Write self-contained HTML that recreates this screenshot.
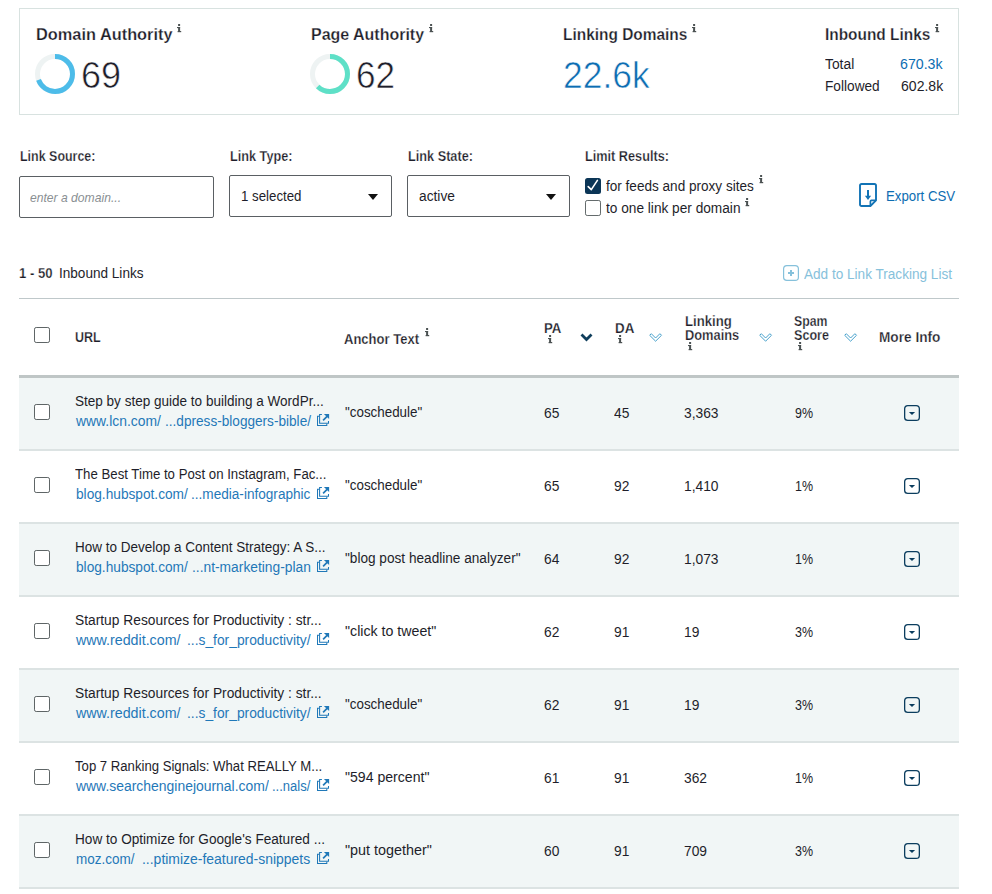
<!DOCTYPE html>
<html><head><meta charset="utf-8"><title>Inbound Links</title>
<style>
html,body{margin:0;padding:0;background:#fff;width:992px;height:894px;overflow:hidden;}
body{position:relative;font-family:"Liberation Sans",sans-serif;}
.t{position:absolute;line-height:1;white-space:nowrap;}
.h{-webkit-text-stroke:0.25px #fff;}
.r{position:absolute;}
</style></head><body>
<div class="r" style="left:19px;top:8px;width:940px;height:107px;border:1px solid #d8e2e0;box-sizing:border-box;"></div>
<div class="t h" style="left:35.70px;top:26px;font-size:17.3px;font-weight:bold;color:#1e1e2a;font-style:normal;letter-spacing:0px;transform:scaleX(0.9461);transform-origin:0 0;">Domain Authority</div>
<svg class="r" style="left:177px;top:24px" width="5" height="9" viewBox="0 0 5 9"><g fill="#4b5152"><rect x="1.1" y="0" width="2" height="2"/><rect x="0" y="3" width="3.1" height="1.1"/><rect x="1.1" y="3" width="2" height="5"/><rect x="0.6" y="7" width="3.6" height="1.2"/></g></svg>
<svg class="r" style="left:35.3px;top:54px" width="40" height="40" viewBox="0 0 40 40"><circle cx="20" cy="20" r="17.5" fill="none" stroke="#eef3f3" stroke-width="5"/><circle cx="20" cy="20" r="17.5" fill="none" stroke="#4dbce9" stroke-width="5" stroke-dasharray="75.87 109.96" transform="rotate(-90 20 20)"/></svg>
<div class="t" style="left:81.30px;top:58px;font-size:36.5px;font-weight:normal;color:#1e1e2a;font-style:normal;letter-spacing:0px;transform:scaleX(0.9855);transform-origin:0 0;-webkit-text-stroke:0.6px #fff;">69</div>
<div class="t h" style="left:310.80px;top:26px;font-size:17.3px;font-weight:bold;color:#1e1e2a;font-style:normal;letter-spacing:0px;transform:scaleX(0.9249);transform-origin:0 0;">Page Authority</div>
<svg class="r" style="left:429px;top:24px" width="5" height="9" viewBox="0 0 5 9"><g fill="#4b5152"><rect x="1.1" y="0" width="2" height="2"/><rect x="0" y="3" width="3.1" height="1.1"/><rect x="1.1" y="3" width="2" height="5"/><rect x="0.6" y="7" width="3.6" height="1.2"/></g></svg>
<svg class="r" style="left:310px;top:54px" width="40" height="40" viewBox="0 0 40 40"><circle cx="20" cy="20" r="17.5" fill="none" stroke="#eef3f3" stroke-width="5"/><circle cx="20" cy="20" r="17.5" fill="none" stroke="#5ee0c7" stroke-width="5" stroke-dasharray="68.17 109.96" transform="rotate(-90 20 20)"/></svg>
<div class="t" style="left:356.20px;top:58px;font-size:36.5px;font-weight:normal;color:#1e1e2a;font-style:normal;letter-spacing:0px;transform:scaleX(0.9633);transform-origin:0 0;-webkit-text-stroke:0.6px #fff;">62</div>
<div class="t h" style="left:562.50px;top:26px;font-size:17.3px;font-weight:bold;color:#1e1e2a;font-style:normal;letter-spacing:0px;transform:scaleX(0.8933);transform-origin:0 0;">Linking Domains</div>
<svg class="r" style="left:691.8px;top:24px" width="5" height="9" viewBox="0 0 5 9"><g fill="#4b5152"><rect x="1.1" y="0" width="2" height="2"/><rect x="0" y="3" width="3.1" height="1.1"/><rect x="1.1" y="3" width="2" height="5"/><rect x="0.6" y="7" width="3.6" height="1.2"/></g></svg>
<div class="t" style="left:563.40px;top:58px;font-size:36.5px;font-weight:normal;color:#0d6db2;font-style:normal;letter-spacing:0px;transform:scaleX(0.9703);transform-origin:0 0;-webkit-text-stroke:0.6px #fff;">22.6k</div>
<div class="t h" style="left:825.20px;top:26px;font-size:17.3px;font-weight:bold;color:#1e1e2a;font-style:normal;letter-spacing:0px;transform:scaleX(0.8916);transform-origin:0 0;">Inbound Links</div>
<svg class="r" style="left:935px;top:24px" width="5" height="9" viewBox="0 0 5 9"><g fill="#4b5152"><rect x="1.1" y="0" width="2" height="2"/><rect x="0" y="3" width="3.1" height="1.1"/><rect x="1.1" y="3" width="2" height="5"/><rect x="0.6" y="7" width="3.6" height="1.2"/></g></svg>
<div class="t" style="left:825.00px;top:57px;font-size:14px;font-weight:normal;color:#1e1e2a;font-style:normal;letter-spacing:0px;transform:scaleX(0.9876);transform-origin:0 0;">Total</div>
<div class="t" style="left:899.70px;top:57px;font-size:14px;font-weight:normal;color:#0d6db2;font-style:normal;letter-spacing:0px;transform:scaleX(1.0129);transform-origin:0 0;">670.3k</div>
<div class="t" style="left:825.00px;top:79px;font-size:14px;font-weight:normal;color:#1e1e2a;font-style:normal;letter-spacing:0px;transform:scaleX(0.9763);transform-origin:0 0;">Followed</div>
<div class="t" style="left:900.60px;top:79px;font-size:14px;font-weight:normal;color:#1e1e2a;font-style:normal;letter-spacing:0px;transform:scaleX(1.0034);transform-origin:0 0;">602.8k</div>
<div class="t h" style="left:19.50px;top:149px;font-size:14.4px;font-weight:bold;color:#1e1e2a;font-style:normal;letter-spacing:0px;transform:scaleX(0.8656);transform-origin:0 0;">Link Source:</div>
<div class="t h" style="left:229.50px;top:149px;font-size:14.4px;font-weight:bold;color:#1e1e2a;font-style:normal;letter-spacing:0px;transform:scaleX(0.8811);transform-origin:0 0;">Link Type:</div>
<div class="t h" style="left:407.50px;top:149px;font-size:14.4px;font-weight:bold;color:#1e1e2a;font-style:normal;letter-spacing:0px;transform:scaleX(0.8830);transform-origin:0 0;">Link State:</div>
<div class="t h" style="left:585.00px;top:149px;font-size:14.4px;font-weight:bold;color:#1e1e2a;font-style:normal;letter-spacing:0px;transform:scaleX(0.8822);transform-origin:0 0;">Limit Results:</div>
<div class="r" style="left:19px;top:176px;width:195px;height:42px;border:1px solid #5a5f63;border-radius:2px;box-sizing:border-box;"></div>
<div class="t" style="left:30.00px;top:191px;font-size:13px;font-weight:normal;color:#8a8f93;font-style:italic;letter-spacing:0px;transform:scaleX(0.9328);transform-origin:0 0;">enter a domain...</div>
<div class="r" style="left:229px;top:175px;width:163px;height:42px;border:1px solid #5a5f63;border-radius:2px;box-sizing:border-box;"></div>
<div class="t" style="left:241.20px;top:189px;font-size:14px;font-weight:normal;color:#1e1e2a;font-style:normal;letter-spacing:0px;transform:scaleX(0.9479);transform-origin:0 0;">1 selected</div>
<svg class="r" style="left:368px;top:194px" width="10" height="6" viewBox="0 0 10 6"><path d="M0 0H10L5 6Z" fill="#111"/></svg>
<div class="r" style="left:407px;top:175px;width:163px;height:42px;border:1px solid #5a5f63;border-radius:2px;box-sizing:border-box;"></div>
<div class="t" style="left:419.20px;top:189px;font-size:14px;font-weight:normal;color:#1e1e2a;font-style:normal;letter-spacing:0px;transform:scaleX(0.9817);transform-origin:0 0;">active</div>
<svg class="r" style="left:546px;top:194px" width="10" height="6" viewBox="0 0 10 6"><path d="M0 0H10L5 6Z" fill="#111"/></svg>
<div class="r" style="left:585px;top:178px;width:16px;height:16px;background:#0b3556;border-radius:2.5px;"></div>
<svg class="r" style="left:585px;top:178px" width="16" height="16" viewBox="0 0 16 16"><path d="M3.2 8.6 L6.3 11.6 L12.4 2.4" fill="none" stroke="#fff" stroke-width="1.6" stroke-linecap="round" stroke-linejoin="round"/></svg>
<div class="t" style="left:606.25px;top:178.5px;font-size:14px;font-weight:normal;color:#1e1e2a;font-style:normal;letter-spacing:0px;transform:scaleX(0.9690);transform-origin:0 0;">for feeds and proxy sites</div>
<svg class="r" style="left:758.5px;top:175.3px" width="5" height="9" viewBox="0 0 5 9"><g fill="#4b5152"><rect x="1.1" y="0" width="2" height="2"/><rect x="0" y="3" width="3.1" height="1.1"/><rect x="1.1" y="3" width="2" height="5"/><rect x="0.6" y="7" width="3.6" height="1.2"/></g></svg>
<div class="r" style="left:585px;top:200px;width:16px;height:16px;border:1.5px solid #646b6c;border-radius:2.2px;box-sizing:border-box;background:#fff;"></div>
<div class="t" style="left:606.25px;top:200.5px;font-size:14px;font-weight:normal;color:#1e1e2a;font-style:normal;letter-spacing:0px;transform:scaleX(0.9764);transform-origin:0 0;">to one link per domain</div>
<svg class="r" style="left:745.4px;top:197.5px" width="5" height="9" viewBox="0 0 5 9"><g fill="#4b5152"><rect x="1.1" y="0" width="2" height="2"/><rect x="0" y="3" width="3.1" height="1.1"/><rect x="1.1" y="3" width="2" height="5"/><rect x="0.6" y="7" width="3.6" height="1.2"/></g></svg>
<svg class="r" style="left:859px;top:183px" width="18" height="24" viewBox="0 0 18 24"><path d="M1 2.6 Q1 1 2.6 1 H15.4 Q17 1 17 2.6 V17.4 L11.4 23 H2.6 Q1 23 1 21.4 Z" fill="none" stroke="#1273b5" stroke-width="1.9" stroke-linejoin="round"/><path d="M17 17.4 H12.4 Q11.4 17.4 11.4 18.4 V23" fill="none" stroke="#1273b5" stroke-width="1.7"/><path d="M9 7 V14" stroke="#1273b5" stroke-width="2"/><path d="M5.9 12.7 H12.1 L9 16.9 Z" fill="#1273b5"/></svg>
<div class="t" style="left:886.25px;top:189px;font-size:14px;font-weight:normal;color:#0d6db2;font-style:normal;letter-spacing:0px;transform:scaleX(0.9462);transform-origin:0 0;">Export CSV</div>
<div class="t h" style="left:19.20px;top:266px;font-size:14px;font-weight:bold;color:#1e1e2a;font-style:normal;letter-spacing:0px;transform:scaleX(0.9386);transform-origin:0 0;">1 - 50</div>
<div class="t" style="left:59.00px;top:266px;font-size:14px;font-weight:normal;color:#1e1e2a;font-style:normal;letter-spacing:0px;transform:scaleX(0.9693);transform-origin:0 0;">Inbound Links</div>
<svg class="r" style="left:783px;top:265px" width="16" height="16" viewBox="0 0 16 16"><rect x="0.6" y="0.6" width="14.8" height="14.8" rx="3.2" fill="none" stroke="#86c1db" stroke-width="1.2"/><path d="M8 5V11M5 8H11" stroke="#86c1db" stroke-width="2"/></svg>
<div class="t" style="left:803.90px;top:267px;font-size:14px;font-weight:normal;color:#86c1db;font-style:normal;letter-spacing:0px;transform:scaleX(0.9703);transform-origin:0 0;">Add to Link Tracking List</div>
<div class="r" style="left:19px;top:298px;width:940px;height:1px;background:#bfc8ca;"></div>
<div class="r" style="left:34px;top:327px;width:16px;height:16px;border:1.5px solid #5e6566;border-radius:2.2px;box-sizing:border-box;background:#fff;"></div>
<div class="t h" style="left:75.00px;top:330px;font-size:14.2px;font-weight:bold;color:#1e1e2a;font-style:normal;letter-spacing:0px;transform:scaleX(0.8807);transform-origin:0 0;">URL</div>
<div class="t h" style="left:344.40px;top:332px;font-size:14.2px;font-weight:bold;color:#1e1e2a;font-style:normal;letter-spacing:0px;transform:scaleX(0.9182);transform-origin:0 0;">Anchor Text</div>
<svg class="r" style="left:424.5px;top:328px" width="5" height="9" viewBox="0 0 5 9"><g fill="#4b5152"><rect x="1.1" y="0" width="2" height="2"/><rect x="0" y="3" width="3.1" height="1.1"/><rect x="1.1" y="3" width="2" height="5"/><rect x="0.6" y="7" width="3.6" height="1.2"/></g></svg>
<div class="t h" style="left:544.40px;top:321px;font-size:14.2px;font-weight:bold;color:#1e1e2a;font-style:normal;letter-spacing:0px;transform:scaleX(0.9318);transform-origin:0 0;">PA</div>
<svg class="r" style="left:548px;top:335px" width="5" height="9" viewBox="0 0 5 9"><g fill="#4b5152"><rect x="1.1" y="0" width="2" height="2"/><rect x="0" y="3" width="3.1" height="1.1"/><rect x="1.1" y="3" width="2" height="5"/><rect x="0.6" y="7" width="3.6" height="1.2"/></g></svg>
<svg class="r" style="left:580px;top:333px" width="13" height="9" viewBox="0 0 13 9"><path d="M1.5 1.5 L6.5 6.5 L11.5 1.5" fill="none" stroke="#0f3e5c" stroke-width="2.8"/></svg>
<div class="t h" style="left:614.70px;top:321px;font-size:14.2px;font-weight:bold;color:#1e1e2a;font-style:normal;letter-spacing:0px;transform:scaleX(0.9412);transform-origin:0 0;">DA</div>
<svg class="r" style="left:618.2px;top:335px" width="5" height="9" viewBox="0 0 5 9"><g fill="#4b5152"><rect x="1.1" y="0" width="2" height="2"/><rect x="0" y="3" width="3.1" height="1.1"/><rect x="1.1" y="3" width="2" height="5"/><rect x="0.6" y="7" width="3.6" height="1.2"/></g></svg>
<svg class="r" style="left:649.2px;top:332.5px" width="13.5" height="9" viewBox="0 0 13.5 9"><path d="M0.7 2.3L2.3 0.7L6.6 5L10.9 0.7L12.5 2.3L6.6 8.2Z" fill="none" stroke="#3d9cc9" stroke-width="0.95"/></svg>
<div class="t h" style="left:684.70px;top:314px;font-size:14.2px;font-weight:bold;color:#1e1e2a;font-style:normal;letter-spacing:0px;transform:scaleX(0.9271);transform-origin:0 0;">Linking</div>
<div class="t h" style="left:684.70px;top:328px;font-size:14.2px;font-weight:bold;color:#1e1e2a;font-style:normal;letter-spacing:0px;transform:scaleX(0.9055);transform-origin:0 0;">Domains</div>
<svg class="r" style="left:688px;top:342px" width="5" height="9" viewBox="0 0 5 9"><g fill="#4b5152"><rect x="1.1" y="0" width="2" height="2"/><rect x="0" y="3" width="3.1" height="1.1"/><rect x="1.1" y="3" width="2" height="5"/><rect x="0.6" y="7" width="3.6" height="1.2"/></g></svg>
<svg class="r" style="left:759.2px;top:332.5px" width="13.5" height="9" viewBox="0 0 13.5 9"><path d="M0.7 2.3L2.3 0.7L6.6 5L10.9 0.7L12.5 2.3L6.6 8.2Z" fill="none" stroke="#3d9cc9" stroke-width="0.95"/></svg>
<div class="t h" style="left:794.30px;top:314px;font-size:14.2px;font-weight:bold;color:#1e1e2a;font-style:normal;letter-spacing:0px;transform:scaleX(0.8664);transform-origin:0 0;">Spam</div>
<div class="t h" style="left:794.30px;top:328px;font-size:14.2px;font-weight:bold;color:#1e1e2a;font-style:normal;letter-spacing:0px;transform:scaleX(0.8869);transform-origin:0 0;">Score</div>
<svg class="r" style="left:798.2px;top:342px" width="5" height="9" viewBox="0 0 5 9"><g fill="#4b5152"><rect x="1.1" y="0" width="2" height="2"/><rect x="0" y="3" width="3.1" height="1.1"/><rect x="1.1" y="3" width="2" height="5"/><rect x="0.6" y="7" width="3.6" height="1.2"/></g></svg>
<svg class="r" style="left:844.2px;top:332.5px" width="13.5" height="9" viewBox="0 0 13.5 9"><path d="M0.7 2.3L2.3 0.7L6.6 5L10.9 0.7L12.5 2.3L6.6 8.2Z" fill="none" stroke="#3d9cc9" stroke-width="0.95"/></svg>
<div class="t h" style="left:879.00px;top:330px;font-size:14.2px;font-weight:bold;color:#1e1e2a;font-style:normal;letter-spacing:0px;transform:scaleX(0.9624);transform-origin:0 0;">More Info</div>
<div class="r" style="left:19px;top:375px;width:940px;height:3px;background:#bfc6c6;"></div>
<div class="r" style="left:19px;top:378px;width:940px;height:71px;background:#f1f6f6;"></div>
<div class="r" style="left:19px;top:449px;width:940px;height:2px;background:#dce3e3;"></div>
<div class="r" style="left:34px;top:404px;width:16px;height:16px;border:1.5px solid #5e6566;border-radius:2.2px;box-sizing:border-box;background:#fff;"></div>
<div class="t" style="left:75.30px;top:394px;font-size:14px;font-weight:normal;color:#1e1e2a;font-style:normal;letter-spacing:0px;transform:scaleX(0.9664);transform-origin:0 0;">Step by step guide to building a WordPr...</div>
<div class="t" style="left:75.53px;top:414px;font-size:14px;font-weight:normal;color:#1f78b8;font-style:normal;letter-spacing:0px;transform:scaleX(0.9917);transform-origin:0 0;">www.lcn.com/</div>
<div class="t" style="left:164.60px;top:414px;font-size:14px;font-weight:normal;color:#1f78b8;font-style:normal;letter-spacing:0px;transform:scaleX(0.9721);transform-origin:0 0;">...dpress-bloggers-bible/</div>
<svg class="r" style="left:317px;top:413px" width="13" height="13" viewBox="0 0 13 13"><g fill="none" stroke="#1f78b8" stroke-width="1.05"><path d="M2.3 3.2H0.5V12.5H9.8V10.8"/><path d="M4.9 1.4H2.6V10.3H11.5V8"/></g><path d="M6.1 7.4L10.6 2.9" stroke="#1f78b8" stroke-width="1.7"/><path d="M6.9 0.9H12.1V6.1Z" fill="#1f78b8"/></svg>
<div class="t" style="left:344.50px;top:405px;font-size:14px;font-weight:normal;color:#1e1e2a;font-style:normal;letter-spacing:0px;transform:scaleX(0.9558);transform-origin:0 0;">"coschedule"</div>
<div class="t" style="left:544.20px;top:406px;font-size:14.6px;font-weight:normal;color:#1e1e2a;font-style:normal;letter-spacing:0px;transform:scaleX(0.9452);transform-origin:0 0;">65</div>
<div class="t" style="left:614.00px;top:406px;font-size:14.6px;font-weight:normal;color:#1e1e2a;font-style:normal;letter-spacing:0px;transform:scaleX(0.9452);transform-origin:0 0;">45</div>
<div class="t" style="left:684.30px;top:406px;font-size:14.6px;font-weight:normal;color:#1e1e2a;font-style:normal;letter-spacing:0px;transform:scaleX(0.9452);transform-origin:0 0;">3,363</div>
<div class="t" style="left:794.80px;top:406px;font-size:14.6px;font-weight:normal;color:#1e1e2a;font-style:normal;letter-spacing:0px;transform:scaleX(0.8532);transform-origin:0 0;">9%</div>
<svg class="r" style="left:904px;top:405px" width="16" height="16" viewBox="0 0 16 16"><rect x="0.65" y="0.65" width="14.7" height="14.7" rx="3.2" fill="none" stroke="#0b3d5e" stroke-width="1.3"/><path d="M4.9 6.9H11.1L8 10Z" fill="#0b3d5e"/></svg>
<div class="r" style="left:19px;top:522px;width:940px;height:2px;background:#dce3e3;"></div>
<div class="r" style="left:34px;top:477px;width:16px;height:16px;border:1.5px solid #5e6566;border-radius:2.2px;box-sizing:border-box;background:#fff;"></div>
<div class="t" style="left:75.30px;top:467px;font-size:14px;font-weight:normal;color:#1e1e2a;font-style:normal;letter-spacing:0px;transform:scaleX(0.9447);transform-origin:0 0;">The Best Time to Post on Instagram, Fac...</div>
<div class="t" style="left:75.50px;top:487px;font-size:14px;font-weight:normal;color:#1f78b8;font-style:normal;letter-spacing:0px;transform:scaleX(0.9772);transform-origin:0 0;">blog.hubspot.com/</div>
<div class="t" style="left:191.20px;top:487px;font-size:14px;font-weight:normal;color:#1f78b8;font-style:normal;letter-spacing:0px;transform:scaleX(0.9711);transform-origin:0 0;">...media-infographic</div>
<svg class="r" style="left:317px;top:486px" width="13" height="13" viewBox="0 0 13 13"><g fill="none" stroke="#1f78b8" stroke-width="1.05"><path d="M2.3 3.2H0.5V12.5H9.8V10.8"/><path d="M4.9 1.4H2.6V10.3H11.5V8"/></g><path d="M6.1 7.4L10.6 2.9" stroke="#1f78b8" stroke-width="1.7"/><path d="M6.9 0.9H12.1V6.1Z" fill="#1f78b8"/></svg>
<div class="t" style="left:344.50px;top:478px;font-size:14px;font-weight:normal;color:#1e1e2a;font-style:normal;letter-spacing:0px;transform:scaleX(0.9558);transform-origin:0 0;">"coschedule"</div>
<div class="t" style="left:544.20px;top:479px;font-size:14.6px;font-weight:normal;color:#1e1e2a;font-style:normal;letter-spacing:0px;transform:scaleX(0.9452);transform-origin:0 0;">65</div>
<div class="t" style="left:614.00px;top:479px;font-size:14.6px;font-weight:normal;color:#1e1e2a;font-style:normal;letter-spacing:0px;transform:scaleX(0.9452);transform-origin:0 0;">92</div>
<div class="t" style="left:684.30px;top:479px;font-size:14.6px;font-weight:normal;color:#1e1e2a;font-style:normal;letter-spacing:0px;transform:scaleX(0.9452);transform-origin:0 0;">1,410</div>
<div class="t" style="left:794.80px;top:479px;font-size:14.6px;font-weight:normal;color:#1e1e2a;font-style:normal;letter-spacing:0px;transform:scaleX(0.8532);transform-origin:0 0;">1%</div>
<svg class="r" style="left:904px;top:478px" width="16" height="16" viewBox="0 0 16 16"><rect x="0.65" y="0.65" width="14.7" height="14.7" rx="3.2" fill="none" stroke="#0b3d5e" stroke-width="1.3"/><path d="M4.9 6.9H11.1L8 10Z" fill="#0b3d5e"/></svg>
<div class="r" style="left:19px;top:524px;width:940px;height:71px;background:#f1f6f6;"></div>
<div class="r" style="left:19px;top:595px;width:940px;height:2px;background:#dce3e3;"></div>
<div class="r" style="left:34px;top:550px;width:16px;height:16px;border:1.5px solid #5e6566;border-radius:2.2px;box-sizing:border-box;background:#fff;"></div>
<div class="t" style="left:75.30px;top:540px;font-size:14px;font-weight:normal;color:#1e1e2a;font-style:normal;letter-spacing:0px;transform:scaleX(0.9641);transform-origin:0 0;">How to Develop a Content Strategy: A S...</div>
<div class="t" style="left:75.50px;top:560px;font-size:14px;font-weight:normal;color:#1f78b8;font-style:normal;letter-spacing:0px;transform:scaleX(0.9772);transform-origin:0 0;">blog.hubspot.com/</div>
<div class="t" style="left:191.70px;top:560px;font-size:14px;font-weight:normal;color:#1f78b8;font-style:normal;letter-spacing:0px;transform:scaleX(0.9858);transform-origin:0 0;">...nt-marketing-plan</div>
<svg class="r" style="left:317px;top:559px" width="13" height="13" viewBox="0 0 13 13"><g fill="none" stroke="#1f78b8" stroke-width="1.05"><path d="M2.3 3.2H0.5V12.5H9.8V10.8"/><path d="M4.9 1.4H2.6V10.3H11.5V8"/></g><path d="M6.1 7.4L10.6 2.9" stroke="#1f78b8" stroke-width="1.7"/><path d="M6.9 0.9H12.1V6.1Z" fill="#1f78b8"/></svg>
<div class="t" style="left:344.50px;top:551px;font-size:14px;font-weight:normal;color:#1e1e2a;font-style:normal;letter-spacing:0px;transform:scaleX(0.9729);transform-origin:0 0;">"blog post headline analyzer"</div>
<div class="t" style="left:544.20px;top:552px;font-size:14.6px;font-weight:normal;color:#1e1e2a;font-style:normal;letter-spacing:0px;transform:scaleX(0.9452);transform-origin:0 0;">64</div>
<div class="t" style="left:614.00px;top:552px;font-size:14.6px;font-weight:normal;color:#1e1e2a;font-style:normal;letter-spacing:0px;transform:scaleX(0.9452);transform-origin:0 0;">92</div>
<div class="t" style="left:684.30px;top:552px;font-size:14.6px;font-weight:normal;color:#1e1e2a;font-style:normal;letter-spacing:0px;transform:scaleX(0.9452);transform-origin:0 0;">1,073</div>
<div class="t" style="left:794.80px;top:552px;font-size:14.6px;font-weight:normal;color:#1e1e2a;font-style:normal;letter-spacing:0px;transform:scaleX(0.8532);transform-origin:0 0;">1%</div>
<svg class="r" style="left:904px;top:551px" width="16" height="16" viewBox="0 0 16 16"><rect x="0.65" y="0.65" width="14.7" height="14.7" rx="3.2" fill="none" stroke="#0b3d5e" stroke-width="1.3"/><path d="M4.9 6.9H11.1L8 10Z" fill="#0b3d5e"/></svg>
<div class="r" style="left:19px;top:668px;width:940px;height:2px;background:#dce3e3;"></div>
<div class="r" style="left:34px;top:623px;width:16px;height:16px;border:1.5px solid #5e6566;border-radius:2.2px;box-sizing:border-box;background:#fff;"></div>
<div class="t" style="left:75.30px;top:613px;font-size:14px;font-weight:normal;color:#1e1e2a;font-style:normal;letter-spacing:0px;transform:scaleX(0.9847);transform-origin:0 0;">Startup Resources for Productivity : str...</div>
<div class="t" style="left:75.53px;top:633px;font-size:14px;font-weight:normal;color:#1f78b8;font-style:normal;letter-spacing:0px;transform:scaleX(1.0172);transform-origin:0 0;">www.reddit.com/</div>
<div class="t" style="left:187.00px;top:633px;font-size:14px;font-weight:normal;color:#1f78b8;font-style:normal;letter-spacing:0px;transform:scaleX(0.9867);transform-origin:0 0;">...s_for_productivity/</div>
<svg class="r" style="left:317px;top:632px" width="13" height="13" viewBox="0 0 13 13"><g fill="none" stroke="#1f78b8" stroke-width="1.05"><path d="M2.3 3.2H0.5V12.5H9.8V10.8"/><path d="M4.9 1.4H2.6V10.3H11.5V8"/></g><path d="M6.1 7.4L10.6 2.9" stroke="#1f78b8" stroke-width="1.7"/><path d="M6.9 0.9H12.1V6.1Z" fill="#1f78b8"/></svg>
<div class="t" style="left:344.50px;top:624px;font-size:14px;font-weight:normal;color:#1e1e2a;font-style:normal;letter-spacing:0px;transform:scaleX(1.0136);transform-origin:0 0;">"click to tweet"</div>
<div class="t" style="left:544.20px;top:625px;font-size:14.6px;font-weight:normal;color:#1e1e2a;font-style:normal;letter-spacing:0px;transform:scaleX(0.9452);transform-origin:0 0;">62</div>
<div class="t" style="left:614.00px;top:625px;font-size:14.6px;font-weight:normal;color:#1e1e2a;font-style:normal;letter-spacing:0px;transform:scaleX(0.9452);transform-origin:0 0;">91</div>
<div class="t" style="left:684.30px;top:625px;font-size:14.6px;font-weight:normal;color:#1e1e2a;font-style:normal;letter-spacing:0px;transform:scaleX(0.9452);transform-origin:0 0;">19</div>
<div class="t" style="left:794.80px;top:625px;font-size:14.6px;font-weight:normal;color:#1e1e2a;font-style:normal;letter-spacing:0px;transform:scaleX(0.8532);transform-origin:0 0;">3%</div>
<svg class="r" style="left:904px;top:624px" width="16" height="16" viewBox="0 0 16 16"><rect x="0.65" y="0.65" width="14.7" height="14.7" rx="3.2" fill="none" stroke="#0b3d5e" stroke-width="1.3"/><path d="M4.9 6.9H11.1L8 10Z" fill="#0b3d5e"/></svg>
<div class="r" style="left:19px;top:670px;width:940px;height:71px;background:#f1f6f6;"></div>
<div class="r" style="left:19px;top:741px;width:940px;height:2px;background:#dce3e3;"></div>
<div class="r" style="left:34px;top:696px;width:16px;height:16px;border:1.5px solid #5e6566;border-radius:2.2px;box-sizing:border-box;background:#fff;"></div>
<div class="t" style="left:75.30px;top:686px;font-size:14px;font-weight:normal;color:#1e1e2a;font-style:normal;letter-spacing:0px;transform:scaleX(0.9847);transform-origin:0 0;">Startup Resources for Productivity : str...</div>
<div class="t" style="left:75.53px;top:706px;font-size:14px;font-weight:normal;color:#1f78b8;font-style:normal;letter-spacing:0px;transform:scaleX(1.0172);transform-origin:0 0;">www.reddit.com/</div>
<div class="t" style="left:187.00px;top:706px;font-size:14px;font-weight:normal;color:#1f78b8;font-style:normal;letter-spacing:0px;transform:scaleX(0.9867);transform-origin:0 0;">...s_for_productivity/</div>
<svg class="r" style="left:317px;top:705px" width="13" height="13" viewBox="0 0 13 13"><g fill="none" stroke="#1f78b8" stroke-width="1.05"><path d="M2.3 3.2H0.5V12.5H9.8V10.8"/><path d="M4.9 1.4H2.6V10.3H11.5V8"/></g><path d="M6.1 7.4L10.6 2.9" stroke="#1f78b8" stroke-width="1.7"/><path d="M6.9 0.9H12.1V6.1Z" fill="#1f78b8"/></svg>
<div class="t" style="left:344.50px;top:697px;font-size:14px;font-weight:normal;color:#1e1e2a;font-style:normal;letter-spacing:0px;transform:scaleX(0.9558);transform-origin:0 0;">"coschedule"</div>
<div class="t" style="left:544.20px;top:698px;font-size:14.6px;font-weight:normal;color:#1e1e2a;font-style:normal;letter-spacing:0px;transform:scaleX(0.9452);transform-origin:0 0;">62</div>
<div class="t" style="left:614.00px;top:698px;font-size:14.6px;font-weight:normal;color:#1e1e2a;font-style:normal;letter-spacing:0px;transform:scaleX(0.9452);transform-origin:0 0;">91</div>
<div class="t" style="left:684.30px;top:698px;font-size:14.6px;font-weight:normal;color:#1e1e2a;font-style:normal;letter-spacing:0px;transform:scaleX(0.9452);transform-origin:0 0;">19</div>
<div class="t" style="left:794.80px;top:698px;font-size:14.6px;font-weight:normal;color:#1e1e2a;font-style:normal;letter-spacing:0px;transform:scaleX(0.8532);transform-origin:0 0;">3%</div>
<svg class="r" style="left:904px;top:697px" width="16" height="16" viewBox="0 0 16 16"><rect x="0.65" y="0.65" width="14.7" height="14.7" rx="3.2" fill="none" stroke="#0b3d5e" stroke-width="1.3"/><path d="M4.9 6.9H11.1L8 10Z" fill="#0b3d5e"/></svg>
<div class="r" style="left:19px;top:814px;width:940px;height:2px;background:#dce3e3;"></div>
<div class="r" style="left:34px;top:769px;width:16px;height:16px;border:1.5px solid #5e6566;border-radius:2.2px;box-sizing:border-box;background:#fff;"></div>
<div class="t" style="left:75.30px;top:759px;font-size:14px;font-weight:normal;color:#1e1e2a;font-style:normal;letter-spacing:0px;transform:scaleX(0.9389);transform-origin:0 0;">Top 7 Ranking Signals: What REALLY M...</div>
<div class="t" style="left:75.53px;top:779px;font-size:14px;font-weight:normal;color:#1f78b8;font-style:normal;letter-spacing:0px;transform:scaleX(0.9948);transform-origin:0 0;">www.searchenginejournal.com/</div>
<div class="t" style="left:272.20px;top:779px;font-size:14px;font-weight:normal;color:#1f78b8;font-style:normal;letter-spacing:0px;transform:scaleX(0.9310);transform-origin:0 0;">...nals/</div>
<svg class="r" style="left:317px;top:778px" width="13" height="13" viewBox="0 0 13 13"><g fill="none" stroke="#1f78b8" stroke-width="1.05"><path d="M2.3 3.2H0.5V12.5H9.8V10.8"/><path d="M4.9 1.4H2.6V10.3H11.5V8"/></g><path d="M6.1 7.4L10.6 2.9" stroke="#1f78b8" stroke-width="1.7"/><path d="M6.9 0.9H12.1V6.1Z" fill="#1f78b8"/></svg>
<div class="t" style="left:344.50px;top:770px;font-size:14px;font-weight:normal;color:#1e1e2a;font-style:normal;letter-spacing:0px;transform:scaleX(1.0061);transform-origin:0 0;">"594 percent"</div>
<div class="t" style="left:544.20px;top:771px;font-size:14.6px;font-weight:normal;color:#1e1e2a;font-style:normal;letter-spacing:0px;transform:scaleX(0.9452);transform-origin:0 0;">61</div>
<div class="t" style="left:614.00px;top:771px;font-size:14.6px;font-weight:normal;color:#1e1e2a;font-style:normal;letter-spacing:0px;transform:scaleX(0.9452);transform-origin:0 0;">91</div>
<div class="t" style="left:684.30px;top:771px;font-size:14.6px;font-weight:normal;color:#1e1e2a;font-style:normal;letter-spacing:0px;transform:scaleX(0.9452);transform-origin:0 0;">362</div>
<div class="t" style="left:794.80px;top:771px;font-size:14.6px;font-weight:normal;color:#1e1e2a;font-style:normal;letter-spacing:0px;transform:scaleX(0.8532);transform-origin:0 0;">1%</div>
<svg class="r" style="left:904px;top:770px" width="16" height="16" viewBox="0 0 16 16"><rect x="0.65" y="0.65" width="14.7" height="14.7" rx="3.2" fill="none" stroke="#0b3d5e" stroke-width="1.3"/><path d="M4.9 6.9H11.1L8 10Z" fill="#0b3d5e"/></svg>
<div class="r" style="left:19px;top:816px;width:940px;height:71px;background:#f1f6f6;"></div>
<div class="r" style="left:19px;top:887px;width:940px;height:2px;background:#dce3e3;"></div>
<div class="r" style="left:34px;top:842px;width:16px;height:16px;border:1.5px solid #5e6566;border-radius:2.2px;box-sizing:border-box;background:#fff;"></div>
<div class="t" style="left:75.30px;top:832px;font-size:14px;font-weight:normal;color:#1e1e2a;font-style:normal;letter-spacing:0px;transform:scaleX(0.9723);transform-origin:0 0;">How to Optimize for Google's Featured ...</div>
<div class="t" style="left:75.50px;top:852px;font-size:14px;font-weight:normal;color:#1f78b8;font-style:normal;letter-spacing:0px;transform:scaleX(0.9641);transform-origin:0 0;">moz.com/</div>
<div class="t" style="left:142.40px;top:852px;font-size:14px;font-weight:normal;color:#1f78b8;font-style:normal;letter-spacing:0px;transform:scaleX(0.9961);transform-origin:0 0;">...ptimize-featured-snippets</div>
<svg class="r" style="left:317px;top:851px" width="13" height="13" viewBox="0 0 13 13"><g fill="none" stroke="#1f78b8" stroke-width="1.05"><path d="M2.3 3.2H0.5V12.5H9.8V10.8"/><path d="M4.9 1.4H2.6V10.3H11.5V8"/></g><path d="M6.1 7.4L10.6 2.9" stroke="#1f78b8" stroke-width="1.7"/><path d="M6.9 0.9H12.1V6.1Z" fill="#1f78b8"/></svg>
<div class="t" style="left:344.50px;top:843px;font-size:14px;font-weight:normal;color:#1e1e2a;font-style:normal;letter-spacing:0px;transform:scaleX(1.0265);transform-origin:0 0;">"put together"</div>
<div class="t" style="left:544.20px;top:844px;font-size:14.6px;font-weight:normal;color:#1e1e2a;font-style:normal;letter-spacing:0px;transform:scaleX(0.9452);transform-origin:0 0;">60</div>
<div class="t" style="left:614.00px;top:844px;font-size:14.6px;font-weight:normal;color:#1e1e2a;font-style:normal;letter-spacing:0px;transform:scaleX(0.9452);transform-origin:0 0;">91</div>
<div class="t" style="left:684.30px;top:844px;font-size:14.6px;font-weight:normal;color:#1e1e2a;font-style:normal;letter-spacing:0px;transform:scaleX(0.9452);transform-origin:0 0;">709</div>
<div class="t" style="left:794.80px;top:844px;font-size:14.6px;font-weight:normal;color:#1e1e2a;font-style:normal;letter-spacing:0px;transform:scaleX(0.8532);transform-origin:0 0;">3%</div>
<svg class="r" style="left:904px;top:843px" width="16" height="16" viewBox="0 0 16 16"><rect x="0.65" y="0.65" width="14.7" height="14.7" rx="3.2" fill="none" stroke="#0b3d5e" stroke-width="1.3"/><path d="M4.9 6.9H11.1L8 10Z" fill="#0b3d5e"/></svg>
</body></html>
